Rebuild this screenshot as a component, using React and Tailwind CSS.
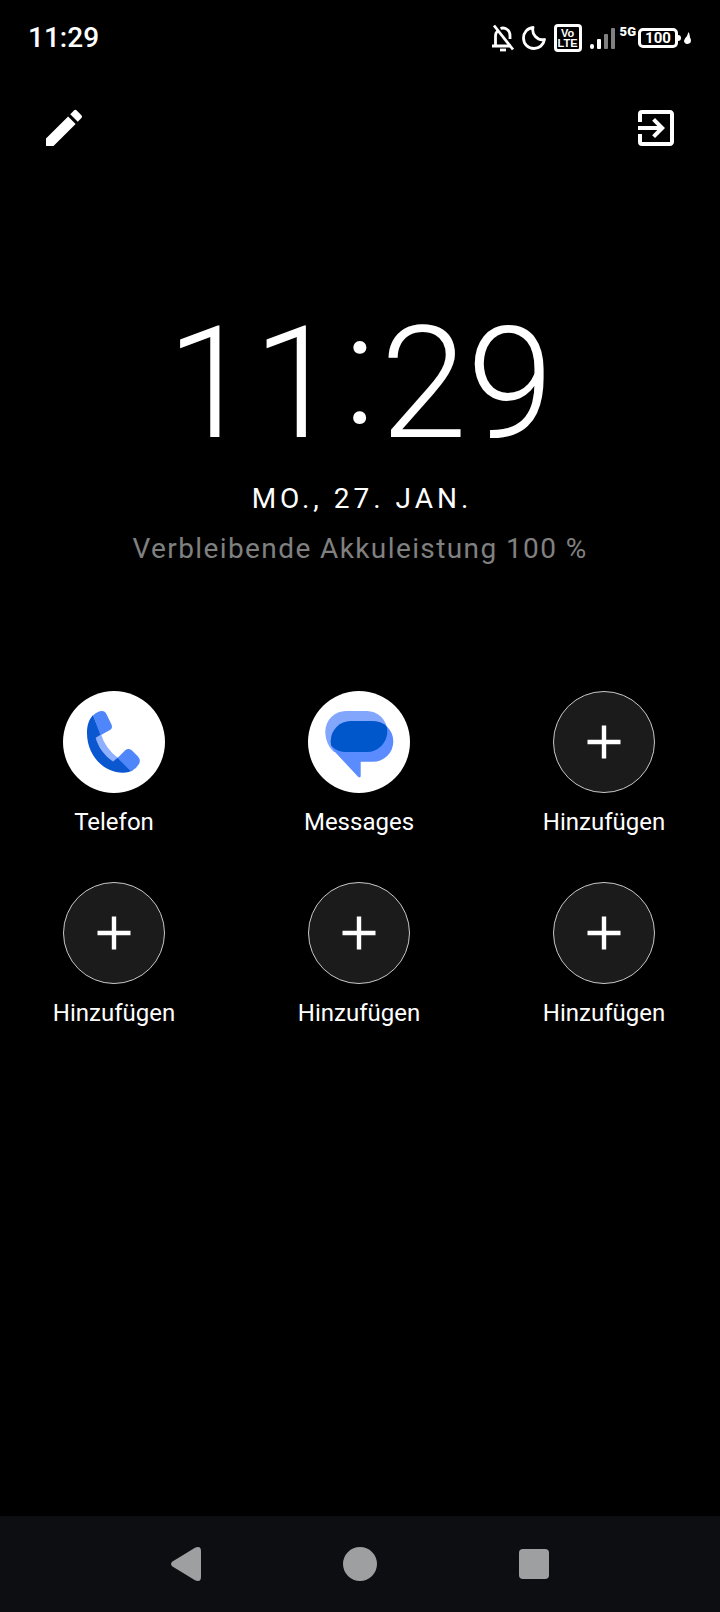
import { MdExitToApp, MdModeEdit } from 'react-icons/md';

const shortcuts = [
  { id: 1, label: 'Telefon', icon: 'phone' },
  { id: 2, label: 'Messages', icon: 'messages' },
  { id: 3, label: 'Hinzufügen' },
  { id: 4, label: 'Hinzufügen' },
  { id: 5, label: 'Hinzufügen' },
  { id: 6, label: 'Hinzufügen' },
];

function PhoneIcon() {
  return (
    <svg viewBox="0 0 102 102" className="size-full" aria-hidden="true">
      <path fill="#8fb0ff" d="M32 46 L38 43 Q42 57 55 67 L50 71 Q37 61 32 46Z" />
      <path
        fill="#0b57d0"
        d="M30 24 C25.500 29 24 35 24 42 C24 64 40 81.700 60 81.700 C64 81.700 68 80.500 70 79 L55 66.500 L50 70.500 C41 64 35.500 56 32.700 46.700 L38 43.500Z"
      />
      <path fill="#4f86fa" d="M30 24.500 C33 21.500 36 20 39 20 Q42 20 43.400 23 L48.500 33.500 Q50 37 47 39 L37.500 44.200Z" />
      <path fill="#4f86fa" d="M54.500 67 L62 59.500 Q65 57 68.500 59 L75 65.500 Q78 69 76 73 Q73 78 68 80.500Z" />
    </svg>
  );
}

function MessagesIcon() {
  return (
    <svg viewBox="0 0 102 102" className="size-full" aria-hidden="true">
      <defs>
        <clipPath id="bubble">
          <rect x="17.300" y="20" width="62" height="41" rx="20.500" />
        </clipPath>
      </defs>
      <path fill="#83a6fd" d="M37.800 20 H58.800 A20.500 20.500 0 0 1 58.800 61 H26 C21 57 17.300 49 17.300 40.500 A20.500 20.500 0 0 1 37.800 20Z" />
      <path
        fill="#5a8cff"
        d="M43 30 H65 A20.300 20.300 0 0 1 65 70.700 H52.700 V85 Q52.500 87.200 50.300 86 L27 61 Q22.700 56 22.700 50 A20.300 20.300 0 0 1 43 30Z"
      />
      <rect x="22.700" y="30" width="62.600" height="40.700" rx="20.300" fill="#0057cc" clipPath="url(#bubble)" />
    </svg>
  );
}

function StatusBar() {
  return (
    <div className="flex h-[76px] items-center justify-between px-7">
      <span className="text-[28px] leading-8 font-medium">11:29</span>
      <div className="flex items-center">
        <svg viewBox="0 0 24 28" className="mr-[7px] h-7 w-6" fill="none" stroke="#fff" strokeWidth="2.800" aria-hidden="true">
          <path d="M1 22 H20 M4.500 22 V12 Q4.500 9 6.500 7 M9.500 4.500 Q12 3.500 14.500 4.500 Q19 6.500 19 12 V15" />
          <path d="M3 1.500 L22 25.500" />
          <path d="M9 26 H15" />
        </svg>
        <svg viewBox="0 0 24 24" className="mr-2 size-6" fill="none" stroke="#fff" strokeWidth="2.800" strokeLinejoin="round" aria-hidden="true">
          <path d="M11 1.500 C9.500 8 15 15 22.500 13.500 C21.500 19 17 22.500 12 22.500 C6 22.500 1.500 18 1.500 12 C1.500 6.500 5.500 2 11 1.500Z" />
        </svg>
        <div className="mr-2 flex size-7 flex-col items-center justify-center rounded border-[3px] border-white font-['Liberation_Sans',sans-serif] text-[11px] leading-[10px] font-bold">
          <span>Vo</span>
          <span>LTE</span>
        </div>
        <svg viewBox="0 0 26 22" className="mr-1 h-[22px] w-[26px]" aria-hidden="true">
          <rect y="17" width="4" height="5" rx="2" fill="#fff" />
          <rect x="7" y="12" width="4" height="10" rx="1" fill="#fff" />
          <rect x="14" y="7" width="4" height="15" rx="1" fill="#808080" />
          <rect x="21" y="1" width="4" height="21" rx="1" fill="#808080" />
        </svg>
        <span className="mr-[2px] mb-3 text-[13px] leading-3 font-black">5G</span>
        <span className="flex h-5 w-10 items-center justify-center rounded-[5px] border-[3px] border-white text-[15px] leading-4 font-bold">
          100
        </span>
        <svg viewBox="0 0 14 14" className="size-[14px]" fill="#fff" aria-hidden="true">
          <path d="M0 4 Q3 4 3 7 Q3 10 0 10Z" />
          <path d="M10.500 1 Q9.500 5 7 7.500 Q5.500 9.500 6.500 11.500 Q7.500 13 9.500 13 Q13 12.500 13 9.500 Q13 8 12 6.500 Q12 3 10.500 1Z" />
        </svg>
      </div>
    </div>
  );
}

function Shortcut({ label, icon }) {
  return (
    <button type="button" className="flex w-32 flex-col items-center gap-[13px]">
      {icon ? (
        <span className="size-[102px] overflow-hidden rounded-full bg-white">
          {icon === 'phone' ? <PhoneIcon /> : <MessagesIcon />}
        </span>
      ) : (
        <span className="flex size-[102px] items-center justify-center rounded-full border border-[#c8c8c8] bg-[#1b1b1b]">
          <svg viewBox="0 0 34 34" className="size-[34px]" stroke="#fff" strokeWidth="4.400" aria-hidden="true">
            <path d="M17 0.500 V33.500 M0.500 17 H33.500" />
          </svg>
        </span>
      )}
      <span className="text-2xl leading-8">{label}</span>
    </button>
  );
}

export default function App() {
  return (
    <div className="flex min-h-screen flex-col bg-black font-['Roboto',sans-serif] text-white">
      <StatusBar />

      <header className="flex items-center justify-between px-10 pt-7">
        <button type="button" aria-label="Bearbeiten">
          <MdModeEdit className="size-12" />
        </button>
        <button type="button" aria-label="Beenden">
          <MdExitToApp className="size-12" />
        </button>
      </header>

      <main className="flex-1">
        <section className="mt-[154px] flex flex-col items-center">
          {/* the colon is raised to sit centred on the digits */}
          <h1 className="text-[156px] leading-[156px] font-light">
            11<span className="px-1 align-[14px] leading-[100px]">:</span>29
          </h1>
          <p className="mt-[17px] pl-1 text-[28px] leading-10 tracking-[4px]">MO., 27. JAN.</p>
          <p className="mt-[10px] text-[28px] leading-10 tracking-wider text-[#808080]">
            Verbleibende Akkuleistung 100 %
          </p>
        </section>

        <section className="mt-[122px] grid grid-cols-[repeat(3,auto)] justify-between gap-y-11 pr-[52px] pl-[50px]">
          {shortcuts.map((item) => (
            <Shortcut key={item.id} label={item.label} icon={item.icon} />
          ))}
        </section>
      </main>

      <nav className="flex h-24 items-center justify-center bg-[#0d0e11]">
        <button type="button" aria-label="Zurück" className="flex h-full w-[174px] items-center justify-center">
          <svg viewBox="0 0 30 34" className="h-[34px] w-[30px]" fill="#9e9fa1" aria-hidden="true">
            <path d="M1.500 14.500 L24 0.800 Q30 -1.500 30 4 V30 Q30 35.500 24 33.200 L1.500 19.500 Q-1.500 17 1.500 14.500Z" />
          </svg>
        </button>
        <button type="button" aria-label="Startseite" className="flex h-full w-[174px] items-center justify-center">
          <span className="size-[34px] rounded-full bg-[#9e9fa1]" />
        </button>
        <button type="button" aria-label="Übersicht" className="flex h-full w-[174px] items-center justify-center">
          <span className="size-[30px] rounded bg-[#9e9fa1]" />
        </button>
      </nav>
    </div>
  );
}
